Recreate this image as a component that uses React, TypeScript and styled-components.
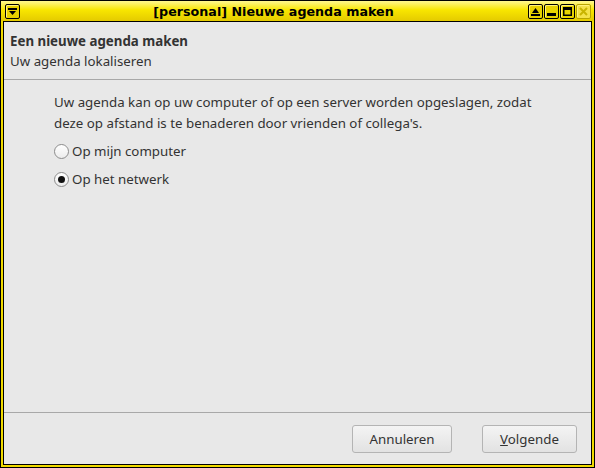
import React from 'react'
import styled, { createGlobalStyle } from 'styled-components'

const Global = createGlobalStyle`
  html, body {
    margin: 0;
    padding: 0;
    background: #e8e8e8;
  }
  * {
    box-sizing: border-box;
  }
`

const Frame = styled.div`
  width: 595px;
  height: 468px;
  display: flex;
  flex-direction: column;
  border: 1px solid #000;
  background: #f0da00;
  padding: 0 2px 2px 2px;
`

const TitleBar = styled.div`
  height: 20px;
  display: flex;
  align-items: center;
  margin: 0 -2px;
  padding: 1px 3px 0 3px;
  background: linear-gradient(#fff790, #f8e600 45%, #e4ca00);
`

const TitleText = styled.div`
  flex: 1;
  text-align: center;
  font-family: 'DejaVu Sans', sans-serif;
  font-weight: bold;
  font-size: 12.7px;
  color: #000;
`

const WinButton = styled.div<{ faded?: boolean }>`
  width: 15px;
  height: 15px;
  border: 1px solid ${(p) => (p.faded ? '#b8a400' : '#000')};
  border-radius: 2px;
  background: ${(p) => (p.faded ? '#f4e24a' : '#e8d200')};
  display: flex;
  align-items: center;
  justify-content: center;
  margin-left: 1px;
  box-shadow: inset 1px 1px 0 #fff27a;
`

const Client = styled.div`
  flex: 1;
  display: flex;
  flex-direction: column;
  border: 1px solid #000;
  background: #e8e8e8;
  font-family: 'Noto Sans', 'Open Sans', sans-serif;
  font-size: 13.3px;
  color: #333;
`

const Header = styled.div`
  padding: 9px 6px 0 6px;
  height: 58px;
  border-bottom: 1px solid #a8a8a8;
`

const HeaderTitle = styled.div`
  font-weight: bold;
  line-height: 20px;
`

const HeaderSub = styled.div`
  line-height: 20px;
`

const Body = styled.div`
  flex: 1;
  padding: 12px 0 0 50px;
  border-bottom: 1px solid #a8a8a8;
`

const Para = styled.p`
  margin: 0 0 3px 0;
  line-height: 21px;
`

const RadioRow = styled.label`
  display: flex;
  align-items: center;
  height: 28px;
`

const Radio = styled.span<{ checked?: boolean }>`
  width: 15px;
  height: 15px;
  border-radius: 50%;
  border: 1px solid #8c8c8c;
  background: linear-gradient(#ffffff, #ececec);
  display: flex;
  align-items: center;
  justify-content: center;
  margin-right: 3px;
  &::after {
    content: '';
    display: ${(p) => (p.checked ? 'block' : 'none')};
    width: 7px;
    height: 7px;
    border-radius: 50%;
    background: #111;
  }
`

const Footer = styled.div`
  height: 51px;
  display: flex;
  justify-content: flex-end;
  align-items: center;
  gap: 30px;
  padding: 0 14px 0 0;
`

const Button = styled.button<{ w: number }>`
  width: ${(p) => p.w}px;
  height: 28px;
  border: 1px solid #b4b4b4;
  border-radius: 3px;
  background: linear-gradient(#f4f4f4, #e2e2e2);
  font-family: 'Noto Sans', 'Open Sans', sans-serif;
  font-size: 13.3px;
  color: #333;
  padding: 0;
`

const App: React.FC = () => {
  return (
    <>
      <Global />
      <Frame>
        <TitleBar>
          <WinButton>
            <svg width='9' height='8' viewBox='0 0 9 8'>
              <rect x='0' y='0' width='9' height='2' fill='#000' />
              <polygon points='1,3 8,3 4.5,7' fill='#000' />
            </svg>
          </WinButton>
          <TitleText>[personal] Nieuwe agenda maken</TitleText>
          <WinButton>
            <svg width='9' height='8' viewBox='0 0 9 8'>
              <polygon points='4.5,0 8,5 1,5' fill='#000' />
              <rect x='0' y='6' width='9' height='2' fill='#000' />
            </svg>
          </WinButton>
          <WinButton>
            <svg width='9' height='9' viewBox='0 0 9 9'>
              <rect x='0' y='6' width='9' height='3' fill='#000' />
            </svg>
          </WinButton>
          <WinButton>
            <svg width='9' height='9' viewBox='0 0 9 9'>
              <rect x='0.75' y='0.75' width='7.5' height='7.5' fill='none' stroke='#000' strokeWidth='1.5' />
              <rect x='0' y='0' width='9' height='3' fill='#000' />
            </svg>
          </WinButton>
          <WinButton faded>
            <svg width='9' height='9' viewBox='0 0 9 9'>
              <path d='M1 1 L8 8 M8 1 L1 8' stroke='#c8b400' strokeWidth='2' />
            </svg>
          </WinButton>
        </TitleBar>
        <Client>
          <Header>
            <HeaderTitle>Een nieuwe agenda maken</HeaderTitle>
            <HeaderSub>Uw agenda lokaliseren</HeaderSub>
          </Header>
          <Body>
            <Para>
              Uw agenda kan op uw computer of op een server worden opgeslagen, zodat
              <br />
              deze op afstand is te benaderen door vrienden of collega's.
            </Para>
            <RadioRow>
              <Radio />
              Op mijn computer
            </RadioRow>
            <RadioRow>
              <Radio checked />
              Op het netwerk
            </RadioRow>
          </Body>
          <Footer>
            <Button w={100}>Annuleren</Button>
            <Button w={95}>
              <u>V</u>olgende
            </Button>
          </Footer>
        </Client>
      </Frame>
    </>
  )
}

export default App
